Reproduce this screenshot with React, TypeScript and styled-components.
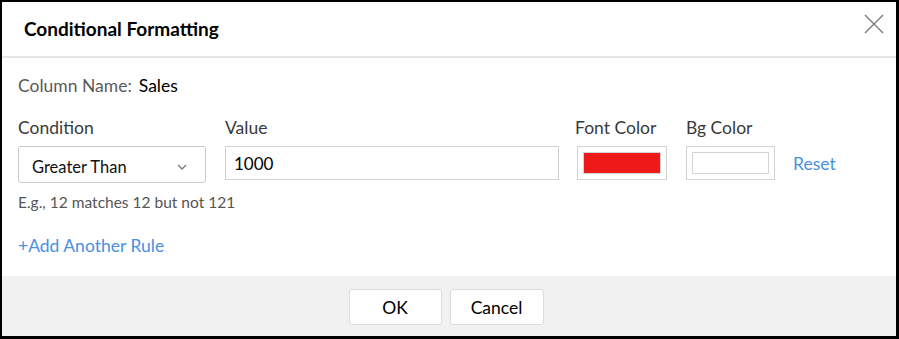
import React from "react";
import styled, { createGlobalStyle } from "styled-components";

const Global = createGlobalStyle`
  html, body { margin: 0; padding: 0; background: #fff; }
  body { font-family: Lato, "Open Sans", sans-serif; }
  * { box-sizing: border-box; }
`;

const Dialog = styled.div`
  width: 899px;
  height: 339px;
  border-style: solid;
  border-color: #000;
  border-width: 2px 3px 3px 2px;
  display: flex;
  flex-direction: column;
  background: #fff;
`;

const Header = styled.div`
  height: 56px;
  border-bottom: 2px solid #e6e6e6;
  display: flex;
  align-items: center;
  justify-content: space-between;
  padding: 0 10px 2px 22px;
`;

const Title = styled.h1`
  margin: 0;
  font-size: 19px;
  font-weight: 700;
  color: #000;
`;

const CloseButton = styled.button`
  border: none;
  background: none;
  padding: 0;
  width: 24px;
  height: 24px;
  display: flex;
  align-items: center;
  justify-content: center;
  cursor: pointer;
  margin-top: -8px;
`;

const Body = styled.div`
  flex: 1;
  padding: 17px 16px 0 16px;
  display: flex;
  flex-direction: column;
`;

const ColumnRow = styled.div`
  display: flex;
  gap: 7px;
  font-size: 17.5px;
  line-height: 21px;
`;

const Muted = styled.span`
  color: #5a5a5a;
`;

const Strong = styled.span`
  color: #000;
`;

const FieldsRow = styled.div`
  display: flex;
  align-items: flex-end;
  margin-top: 21px;
`;

const Field = styled.div<{ $w: number; $mr: number }>`
  display: flex;
  flex-direction: column;
  width: ${(p) => p.$w}px;
  margin-right: ${(p) => p.$mr}px;
`;

const Label = styled.label<{ $shift?: number }>`
  font-size: 17.5px;
  line-height: 21px;
  color: #3a3a3a;
  margin-bottom: 8px;
  margin-left: ${(p) => p.$shift ?? 0}px;
  white-space: nowrap;
`;

const Select = styled.div`
  height: 37px;
  border: 1px solid #c8c8c8;
  border-radius: 3px;
  display: flex;
  align-items: center;
  justify-content: space-between;
  padding: 4px 18px 0 13px;
  font-size: 16.5px;
  color: #111;
`;

const Input = styled.div`
  height: 34px;
  border: 1px solid #d2d2d2;
  display: flex;
  align-items: center;
  padding: 0 8px;
  font-size: 17px;
  color: #000;
  margin-bottom: 3px;
`;

const Swatch = styled.div`
  height: 34px;
  border: 1px solid #d4d4d4;
  padding: 5px;
  margin-bottom: 3px;
`;

const SwatchFill = styled.div<{ $c: string }>`
  height: 100%;
  background: ${(p) => p.$c};
  border: 1px solid #d4d4d4;
`;

const LinkText = styled.a`
  color: #4a90e2;
  font-size: 17.5px;
  text-decoration: none;
  cursor: pointer;
`;

const ResetLink = styled(LinkText)`
  margin-bottom: 9px;
  margin-left: -1px;
`;

const Hint = styled.div`
  font-size: 15.5px;
  color: #555;
  margin-top: 9px;
  line-height: 20px;
`;

const AddRule = styled(LinkText)`
  margin-top: 23px;
  line-height: 22px;
  align-self: flex-start;
`;

const Footer = styled.div`
  height: 60px;
  background: #f1f1f1;
  display: flex;
  justify-content: center;
  align-items: flex-start;
  gap: 8px;
  padding-top: 13px;
  padding-right: 6px;
`;

const Button = styled.button<{ $w: number }>`
  width: ${(p) => p.$w}px;
  height: 36px;
  background: #fff;
  border: 1px solid #dcdcdc;
  border-radius: 3px;
  font-family: Lato, sans-serif;
  font-size: 17.5px;
  color: #000;
  cursor: pointer;
`;

const Chevron = () => (
  <svg width="10" height="6" viewBox="0 0 10 6">
    <path d="M1 1 L5 5 L9 1" fill="none" stroke="#777" strokeWidth="1.3" />
  </svg>
);

const CloseIcon = () => (
  <svg width="20" height="20" viewBox="0 0 20 20">
    <path d="M1 1 L19 19 M19 1 L1 19" stroke="#777" strokeWidth="1.3" />
  </svg>
);

export default function App() {
  return (
    <>
      <Global />
      <Dialog>
        <Header>
          <Title>Conditional Formatting</Title>
          <CloseButton aria-label="Close">
            <CloseIcon />
          </CloseButton>
        </Header>
        <Body>
          <ColumnRow>
            <Muted>Column Name:</Muted>
            <Strong>Sales</Strong>
          </ColumnRow>
          <FieldsRow>
            <Field $w={188} $mr={19}>
              <Label>Condition</Label>
              <Select>
                <span>Greater Than</span>
                <Chevron />
              </Select>
            </Field>
            <Field $w={334} $mr={18}>
              <Label>Value</Label>
              <Input>1000</Input>
            </Field>
            <Field $w={90} $mr={19}>
              <Label $shift={-2}>Font Color</Label>
              <Swatch>
                <SwatchFill $c="#ee1a1a" />
              </Swatch>
            </Field>
            <Field $w={89} $mr={19}>
              <Label>Bg Color</Label>
              <Swatch>
                <SwatchFill $c="#ffffff" />
              </Swatch>
            </Field>
            <ResetLink>Reset</ResetLink>
          </FieldsRow>
          <Hint>E.g., 12 matches 12 but not 121</Hint>
          <AddRule>+Add Another Rule</AddRule>
        </Body>
        <Footer>
          <Button $w={93}>OK</Button>
          <Button $w={94}>Cancel</Button>
        </Footer>
      </Dialog>
    </>
  );
}
